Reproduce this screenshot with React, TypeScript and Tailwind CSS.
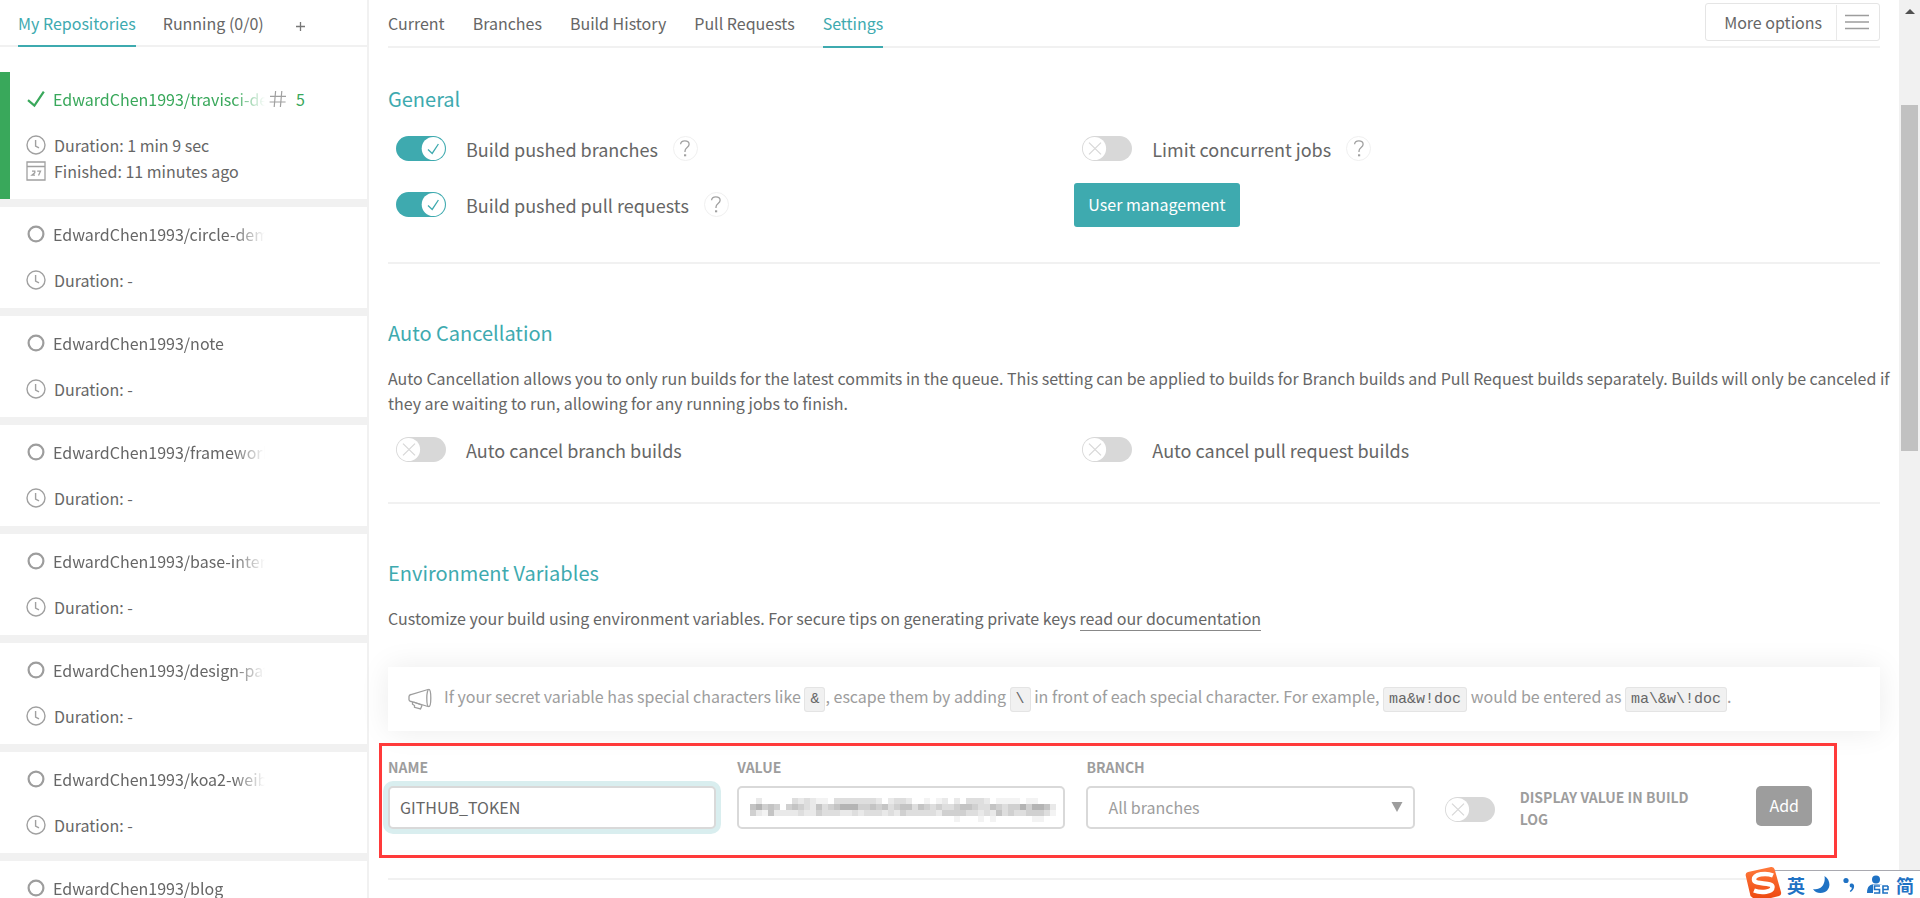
import type { ReactNode } from "react";

type Repo = { name: string; build?: number; duration: string; finished?: string };

const repos: Repo[] = [
  { name: "EdwardChen1993/travisci-demo", build: 5, duration: "1 min 9 sec", finished: "11 minutes ago" },
  { name: "EdwardChen1993/circle-demo", duration: "-" },
  { name: "EdwardChen1993/note", duration: "-" },
  { name: "EdwardChen1993/framework", duration: "-" },
  { name: "EdwardChen1993/base-interview", duration: "-" },
  { name: "EdwardChen1993/design-pattern", duration: "-" },
  { name: "EdwardChen1993/koa2-weibo", duration: "-" },
  { name: "EdwardChen1993/blog", duration: "-" },
];

function ClockIcon() {
  return (
    <svg width="20" height="20" viewBox="0 0 20 20" fill="none" stroke="#a0a0a0" strokeWidth="1.4" className="shrink-0" aria-hidden="true">
      <circle cx="10" cy="10" r="9" />
      <path d="M9.6 5v6l3.4 1.8" />
    </svg>
  );
}

function CalendarIcon() {
  return (
    <svg width="20" height="20" viewBox="0 0 20 20" fill="none" stroke="#a0a0a0" strokeWidth="1.3" className="shrink-0" aria-hidden="true">
      <path d="M1 1h18v18H1zM1 5.5h18" />
      <path d="M6 10.2h2.8v1.6L6 14.2h3M11.2 10.2h3.3l-2 4.4" />
    </svg>
  );
}

function PassedIcon() {
  return (
    <svg width="18" height="18" viewBox="0 0 18 18" fill="none" stroke="#39a85b" strokeWidth="2.2" className="shrink-0" aria-hidden="true">
      <path d="M1 10.2 7.4 15.6 16.8 1.6" />
    </svg>
  );
}

function NoBuildIcon() {
  return (
    <svg width="18" height="18" viewBox="0 0 18 18" fill="none" stroke="#9d9d9d" strokeWidth="2.2" className="shrink-0" aria-hidden="true">
      <circle cx="9" cy="9" r="7.4" />
    </svg>
  );
}

function HashIcon() {
  return (
    <svg width="18" height="18" viewBox="0 0 18 18" fill="none" stroke="#a0a0a0" strokeWidth="1.2" className="shrink-0" aria-hidden="true">
      <path d="M6.6 1 5.2 17M12.8 1l-1.4 16M1 6.3h16M.6 12h16" />
    </svg>
  );
}

function RepoCard({ repo }: { repo: Repo }) {
  const passed = repo.build !== undefined;
  return (
    <li
      className={
        passed
          ? "border-b-8 border-[#f1f1f1]"
          : "border-b-8 border-[#f1f1f1] pt-[14px] pb-[15px] pl-[26px]"
      }
    >
      <div className={passed ? "border-l-10 border-[#39a85b] pt-[14px] pb-[15px] pl-4" : ""}>
        <div className="flex h-[26px] items-center">
          <span className="flex w-[27px] shrink-0 pl-px">{passed ? <PassedIcon /> : <NoBuildIcon />}</span>
          <a
            href="#repo"
            className={
              passed
                ? "w-[212px] overflow-hidden whitespace-nowrap text-[#39a85b] [mask-image:linear-gradient(to_right,black_85%,transparent)]"
                : "w-[212px] overflow-hidden whitespace-nowrap [mask-image:linear-gradient(to_right,black_85%,transparent)]"
            }
          >
            {repo.name}
          </a>
          {passed && (
            <span className="flex items-center gap-[9px] pl-1 text-[#39a85b]">
              <HashIcon />
              {repo.build}
            </span>
          )}
        </div>
        <p className="mt-5 flex h-[26px] items-center gap-2">
          <ClockIcon />
          Duration: {repo.duration}
        </p>
        {repo.finished && (
          <p className="flex h-[26px] items-center gap-2">
            <CalendarIcon />
            Finished: {repo.finished}
          </p>
        )}
      </div>
    </li>
  );
}

function Toggle({ on }: { on?: boolean }) {
  return (
    <svg width="50" height="25" viewBox="0 0 50 25" fill="none" className="shrink-0" aria-hidden="true">
      <rect width="50" height="25" rx="12.5" fill={on ? "#3eaaaf" : "#d8d8d8"} />
      <circle cx={on ? 37.3 : 12.5} cy="12.5" r="11.6" fill="#fff" />
      {on ? (
        <path d="M32 13.6 36.2 17.4 42.4 8" stroke="#3eaaaf" strokeWidth="1.3" />
      ) : (
        <path d="m7 6.6 12 11.8M19 6.6 7 18.4" stroke="#d8d8d8" strokeWidth="1.3" />
      )}
    </svg>
  );
}

function Setting({ label, on, help }: { label: string; on?: boolean; help?: boolean }) {
  return (
    <div className="flex h-14 items-center pb-px pl-2">
      <label className="flex h-[25px] items-center gap-5 text-lg">
        <input type="checkbox" defaultChecked={on} className="sr-only" />
        <Toggle on={on} />
        <span>{label}</span>
      </label>
      {help && (
        <button type="button" aria-label="Help" className="ml-[15px] flex size-[25px] items-center justify-center rounded-full border border-[#f0f0f0]">
          <svg width="12" height="17" viewBox="0 0 12 17" fill="none" stroke="#a0a0a0" strokeWidth="1.3" aria-hidden="true">
            <path d="M1.6 4.2C1.8 2 3.4.9 5.8.9c2.600 0 4.300 1.300 4.300 3.400C10.100 7.600 6 7.400 6 11v1" />
            <path d="M5 15.300h2.200" strokeWidth="2" />
          </svg>
        </button>
      )}
    </div>
  );
}

function Section({ title, first, children, className }: { title: string; first?: boolean; children: ReactNode; className: string }) {
  return (
    <section className={`${first ? "mt-[37px]" : "mt-[55px]"} border-b-2 border-[#f1f1f1] ${className}`}>
      <h2 className="text-xl leading-7 text-[#3eaaaf]">{title}</h2>
      {children}
    </section>
  );
}

function Code({ children }: { children: ReactNode }) {
  return (
    <code className="rounded-[3px] border border-[#e4e4e4] bg-[#f1f1f1] px-[5px] py-[3px] font-['Liberation_Mono',monospace] text-[15px] text-[#666]">
      {children}
    </code>
  );
}

const shades = ["", "#f3f3f3", "#e9e9e9", "#dedede", "#d0d0d0", "#c4c4c4", "#b4b4b4"];
const mosaic = [
  "020000032321103333333202332001012020333201111011000",
  "564540454325345666445453455354343345543354344646652",
  "421522223224333223233323243333324444332325343344431",
  "000000000000000000000000000000000010001010000001100",
];

function MaskedValue() {
  return (
    <svg width="306" height="24" viewBox="0 0 306 24" shapeRendering="crispEdges" aria-hidden="true" className="pointer-events-none absolute top-3 left-[13px]">
      {mosaic.flatMap((row, y) =>
        [...row].map((level, x) =>
          level === "0" ? null : <rect key={`${x}-${y}`} x={x * 6} y={y * 6} width="6" height="6" fill={shades[Number(level)]} />,
        ),
      )}
    </svg>
  );
}

const field = "h-[43px] w-full rounded-[5px] border-2 border-[#d9d9d9] bg-white pb-[2px] outline-none";
const fieldLabel = "block text-sm leading-5 font-bold text-[#9d9d9d]";

function InputMethodBar() {
  return (
    <div className="absolute right-0 bottom-0 flex h-[31px] w-[175px] items-end">
      <div className="ml-auto flex h-7 w-[145px] items-center justify-between border-t border-[#a9a9b0] bg-white pr-[6px] pl-3 text-lg leading-none font-bold text-[#1f72c4]">
        <span>英</span>
        <svg width="20" height="20" viewBox="0 0 20 20" fill="#1f72c4" aria-hidden="true">
          <path d="M12.500 1c8 5 6 17-4 17-3.500 0-6-1.500-7.500-4 7 1.500 13-4 11.500-13z" />
        </svg>
        <svg width="20" height="20" viewBox="0 0 20 20" fill="#1f72c4" aria-hidden="true">
          <circle cx="7" cy="5.500" r="2.600" />
          <path d="M12 8.500c4-1 4.500 5.500-.5 8.500l-.8-1c1.800-1.300 2.300-2.500 2-3.500-2.500 0-2.500-3.500-.7-4z" />
        </svg>
        <svg width="23" height="20" viewBox="0 0 23 20" aria-hidden="true">
          <circle cx="10" cy="4.500" r="4" fill="#1f72c4" />
          <path d="M1 18c0-7 3-9 9-9s7 1 8 3H8v6z" fill="#1f72c4" />
          <path d="M7 9.500h16V19H7z" fill="#fff" />
          <path d="M14 11H8.500v3.500h5V18H8M22 11h-5v7h5M17 14.500h5V11" fill="none" stroke="#1f72c4" strokeWidth="1.600" />
        </svg>
        <span>简</span>
      </div>
      <svg width="38" height="33" viewBox="0 0 38 33" className="absolute bottom-0 left-0" aria-hidden="true">
        <defs>
          <linearGradient id="badge" x1="0" y1="0" x2="0" y2="1">
            <stop offset="0" stopColor="#ff7a3c" />
            <stop offset="1" stopColor="#ee4a12" />
          </linearGradient>
        </defs>
        <path d="M3 7 26 2q3-.5 3.700 2.500L36 27q.8 3-2 4l-8 2H8L5.500 31 .8 11Q0 8 3 7z" fill="url(#badge)" />
        <path d="M28 10.500C21 7.500 9 9 9 14.500c0 6 18.500 2 18.500 7.500 0 5-11 6.500-18.500 3.500" fill="none" stroke="#fff" strokeWidth="4.500" />
      </svg>
    </div>
  );
}

const tabs = ["Current", "Branches", "Build History", "Pull Requests", "Settings"];

export default function App() {
  return (
    <div className="relative flex h-screen overflow-hidden bg-white font-['Noto_Sans_CJK_SC',sans-serif] text-base text-[#666]">
      <aside className="w-[369px] shrink-0 border-r-2 border-[#f1f1f1]">
        <nav className="flex h-[47px] items-stretch gap-[27px] border-b-2 border-[#f1f1f1] pl-[18px]">
          <a href="#mine" className="-mb-[2px] border-b-2 border-[#3eaaaf] leading-[46px] text-[#3eaaaf]">My Repositories</a>
          <a href="#running" className="leading-[46px]">Running (0/0)</a>
          <button type="button" aria-label="Add repository" className="ml-1 flex items-center pt-2">
            <svg width="11" height="11" viewBox="0 0 11 11" stroke="#777" strokeWidth="1.300" aria-hidden="true">
              <path d="M5.500 1v9M1 5.500h9" />
            </svg>
          </button>
        </nav>
        <ul className="mt-[25px]">
          {repos.map((repo) => (
            <RepoCard key={repo.name} repo={repo} />
          ))}
        </ul>
      </aside>

      <main className="min-w-0 flex-1 px-[19px]">
        <header className="flex h-12 items-stretch justify-between border-b-2 border-[#f1f1f1]">
          <nav className="-mb-[2px] flex gap-7">
            {tabs.map((tab) => (
              <a
                key={tab}
                href="#tab"
                className={tab === "Settings" ? "border-b-2 border-[#3eaaaf] leading-[46px] text-[#3eaaaf]" : "leading-[46px]"}
              >
                {tab}
              </a>
            ))}
          </nav>
          <button type="button" className="mt-[3px] flex h-[38px] items-center rounded-[3px] border border-[#e5e5e5] pl-[18px]">
            <span className="pr-[14px]">More options</span>
            <span className="flex h-[35px] items-center border-l border-[#e9e9e9] pr-[10px] pl-2">
              <svg width="24" height="16" viewBox="0 0 24 16" stroke="#9d9d9d" strokeWidth="1.600" aria-hidden="true">
                <path d="M0 1.500h24M0 8h24M0 14.500h24" />
              </svg>
            </span>
          </button>
        </header>

        <Section title="General" first className="pb-[29px]">
          <div className="mt-2 grid grid-cols-[46%_1fr]">
            <Setting label="Build pushed branches" on help />
            <Setting label="Limit concurrent jobs" help />
            <Setting label="Build pushed pull requests" on help />
            <div className="flex h-14 items-center">
              <button type="button" className="h-11 rounded-[3px] bg-[#3eaaaf] px-[14px] pb-[2px] text-white">User management</button>
            </div>
          </div>
        </Section>

        <Section title="Auto Cancellation" className="pb-6">
          <p className="-mr-[18px] mt-[19px] leading-[25px]">
            Auto Cancellation allows you to only run builds for the latest commits in the queue. This setting can be applied to builds for Branch builds and Pull Request builds separately. Builds will only be canceled if they are waiting to run, allowing for any running jobs to finish.
          </p>
          <div className="mt-[6px] grid grid-cols-[46%_1fr]">
            <Setting label="Auto cancel branch builds" />
            <Setting label="Auto cancel pull request builds" />
          </div>
        </Section>

        <Section title="Environment Variables" className="pb-[49px]">
          <p className="mt-[19px] leading-[25px]">
            Customize your build using environment variables. For secure tips on generating private keys{" "}
            <a href="#docs" className="border-b border-[#888]">read our documentation</a>
          </p>
          <div className="mt-9 flex h-16 items-center gap-3 bg-white pl-5 text-[#9d9d9d] shadow-[0_0_30px_rgba(0,0,0,0.08)]">
            <svg width="24" height="22" viewBox="0 0 24 22" fill="none" stroke="#9d9d9d" strokeWidth="1.300" className="shrink-0" aria-hidden="true">
              <path d="M20 1.500 3 6.500Q1 7 1 8.500v3.200Q1 13 3 13.500L20 18.500" />
              <ellipse cx="20.800" cy="10" rx="2" ry="8.700" />
              <path d="M4.500 14v2.200l2 1.300v1.800l6 1.700 1.600-3.800M5.500 14l8 3" />
            </svg>
            <p className="pb-[2px]">
              If your secret variable has special characters like <Code>&amp;</Code>, escape them by adding <Code>\</Code> in front of each special character. For example, <Code>ma&amp;w!doc</Code> would be entered as <Code>ma\&amp;w\!doc</Code>.
            </p>
          </div>

          <form className="relative mt-[26px] grid grid-cols-[22%_22%_22%_1fr] items-end gap-[21px]">
            <div className="pointer-events-none absolute -top-[14px] right-[43px] -bottom-[29px] -left-[9px] border-3 border-[#ff3a3a]" />
            <div>
              <label htmlFor="env-name" className={fieldLabel}>NAME</label>
              <input id="env-name" defaultValue="GITHUB_TOKEN" className={`${field} mt-[9px] px-[10px] shadow-[0_0_0_5px_#d9eeef]`} />
            </div>
            <div>
              <label htmlFor="env-value" className={fieldLabel}>VALUE</label>
              <div className="relative mt-[9px]">
                <input id="env-value" className={`${field} px-[10px]`} />
                <MaskedValue />
              </div>
            </div>
            <div>
              <label htmlFor="env-branch" className={fieldLabel}>BRANCH</label>
              <div className="relative mt-[9px]">
                <select id="env-branch" className={`${field} appearance-none px-5 text-[#9d9d9d]`}>
                  <option>All branches</option>
                </select>
                <svg width="12" height="10" viewBox="0 0 12 10" fill="#9d9d9d" className="pointer-events-none absolute top-4 right-3" aria-hidden="true">
                  <path d="M.5 0h11L6 10z" />
                </svg>
              </div>
            </div>
            <div className="flex h-[43px] items-start justify-between pr-[68px] pl-[9px]">
              <label className="flex items-start gap-[25px] text-sm leading-[22px] font-bold text-[#9d9d9d]">
                <input type="checkbox" className="sr-only" />
                <span className="mt-[11px] flex"><Toggle /></span>
                <span className="w-[180px]">DISPLAY VALUE IN BUILD LOG</span>
              </label>
              <button type="button" className="h-10 rounded-[5px] bg-[#9d9d9d] px-[13px] pb-[2px] text-white">Add</button>
            </div>
          </form>
        </Section>
      </main>

      <div className="flex w-[21px] shrink-0 flex-col items-center bg-[#f1f1f1]">
        <svg width="10" height="5" viewBox="0 0 10 5" fill="#505050" className="mt-[9px] shrink-0" aria-hidden="true">
          <path d="M5 0 10 5H0z" />
        </svg>
        <div className="mt-[91px] h-[346px] w-[17px] shrink-0 bg-[#c1c1c1]" />
      </div>

      <InputMethodBar />
    </div>
  );
}
